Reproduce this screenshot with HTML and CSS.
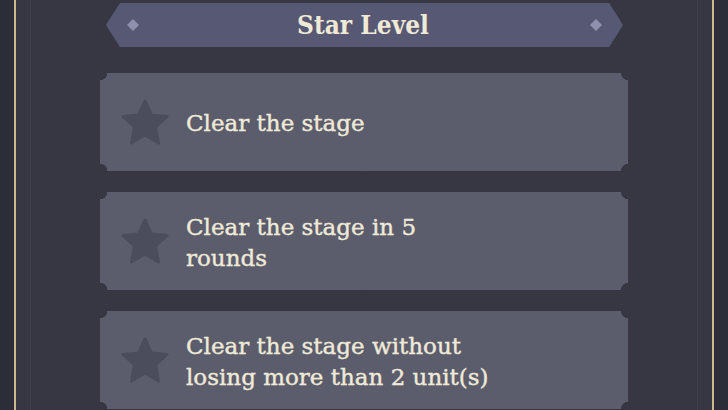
FILE: index.html
```html
<!DOCTYPE html>
<html>
<head>
<meta charset="utf-8">
<link rel="stylesheet" href="styles.css">
</head>
<body>
<div class="frame">
  <div class="panel">
    <div class="header">
      <svg class="header-bg" width="517" height="44" viewBox="0 0 517 44">
        <path d="M14,0 H503 Q511,12 517,22 Q511,32 503,44 H14 Q6,32 0,22 Q6,12 14,0 Z" fill="#575873"/>
        <path d="M21,22 L27,16 L33,22 L27,28 Z" fill="#8e90ae"/>
        <path d="M484,22 L490,16 L496,22 L490,28 Z" fill="#8e90ae"/>
      </svg>
      <span class="title">Star Level</span>
    </div>
    <div class="list">
      <div class="card">
        <svg class="star" width="50" height="46" viewBox="0 0 50 46"><path d="M25,2 L31.5,16 L47,17.5 L35.5,28 L38.5,44 L25,36 L11.5,44 L14.5,28 L3,17.5 L18.5,16 Z" fill="#4b4c5c" stroke="#4b4c5c" stroke-width="3" stroke-linejoin="round"/></svg>
        <div class="text">Clear the stage</div>
      </div>
      <div class="card">
        <svg class="star" width="50" height="46" viewBox="0 0 50 46"><path d="M25,2 L31.5,16 L47,17.5 L35.5,28 L38.5,44 L25,36 L11.5,44 L14.5,28 L3,17.5 L18.5,16 Z" fill="#4b4c5c" stroke="#4b4c5c" stroke-width="3" stroke-linejoin="round"/></svg>
        <div class="text">Clear the stage in 5<br>rounds</div>
      </div>
      <div class="card">
        <svg class="star" width="50" height="46" viewBox="0 0 50 46"><path d="M25,2 L31.5,16 L47,17.5 L35.5,28 L38.5,44 L25,36 L11.5,44 L14.5,28 L3,17.5 L18.5,16 Z" fill="#4b4c5c" stroke="#4b4c5c" stroke-width="3" stroke-linejoin="round"/></svg>
        <div class="text">Clear the stage without<br>losing more than 2 unit(s)</div>
      </div>
    </div>
  </div>
</div>
</body>
</html>
```
FILE: styles.css
```css
html, body {
  margin: 0;
  padding: 0;
  height: 100%;
  overflow: hidden;
}
body {
  background: #2b2d38;
  font-family: "DejaVu Serif", "Liberation Serif", serif;
}
.frame {
  margin-left: 14px;
  width: 700px;
  height: 410px;
  border-left: 2px solid #c9b98c;
  border-right: 2px solid #c9b98c;
  background: #363743;
  box-sizing: border-box;
  padding: 0 14px;
}
.panel {
  height: 100%;
  border-left: 1px solid #3e3f4c;
  border-right: 1px solid #3e3f4c;
  display: flex;
  flex-direction: column;
  align-items: center;
  padding-top: 3px;
  box-sizing: border-box;
}
.header {
  position: relative;
  width: 517px;
  height: 44px;
  display: flex;
  align-items: center;
  justify-content: center;
}
.header-bg {
  position: absolute;
  left: 0;
  top: 0;
}
.title {
  position: relative;
  color: #efe9d6;
  font-weight: bold;
  font-size: 26px;
  font-family: "DejaVu Serif Condensed", "DejaVu Serif", serif;
  margin-left: -2px;
}
.list {
  margin-top: 26px;
  display: flex;
  flex-direction: column;
  gap: 21px;
}
.card {
  width: 528px;
  height: 98px;
  box-sizing: border-box;
  display: flex;
  align-items: center;
  padding-left: 20px;
  gap: 16px;
  background:
    radial-gradient(circle at 0 0, transparent 7px, #5b5c6c 7.5px) top left / 51% 51% no-repeat,
    radial-gradient(circle at 100% 0, transparent 7px, #5b5c6c 7.5px) top right / 51% 51% no-repeat,
    radial-gradient(circle at 0 100%, transparent 7px, #5b5c6c 7.5px) bottom left / 51% 51% no-repeat,
    radial-gradient(circle at 100% 100%, transparent 7px, #5b5c6c 7.5px) bottom right / 51% 51% no-repeat;
}
.star {
  flex: none;
}
.text {
  color: #efead8;
  font-size: 23px;
  line-height: 31px;
  padding-top: 3px;
  font-family: "DejaVu Serif", serif;
  -webkit-text-stroke: 0.4px #efead8;
}
```
